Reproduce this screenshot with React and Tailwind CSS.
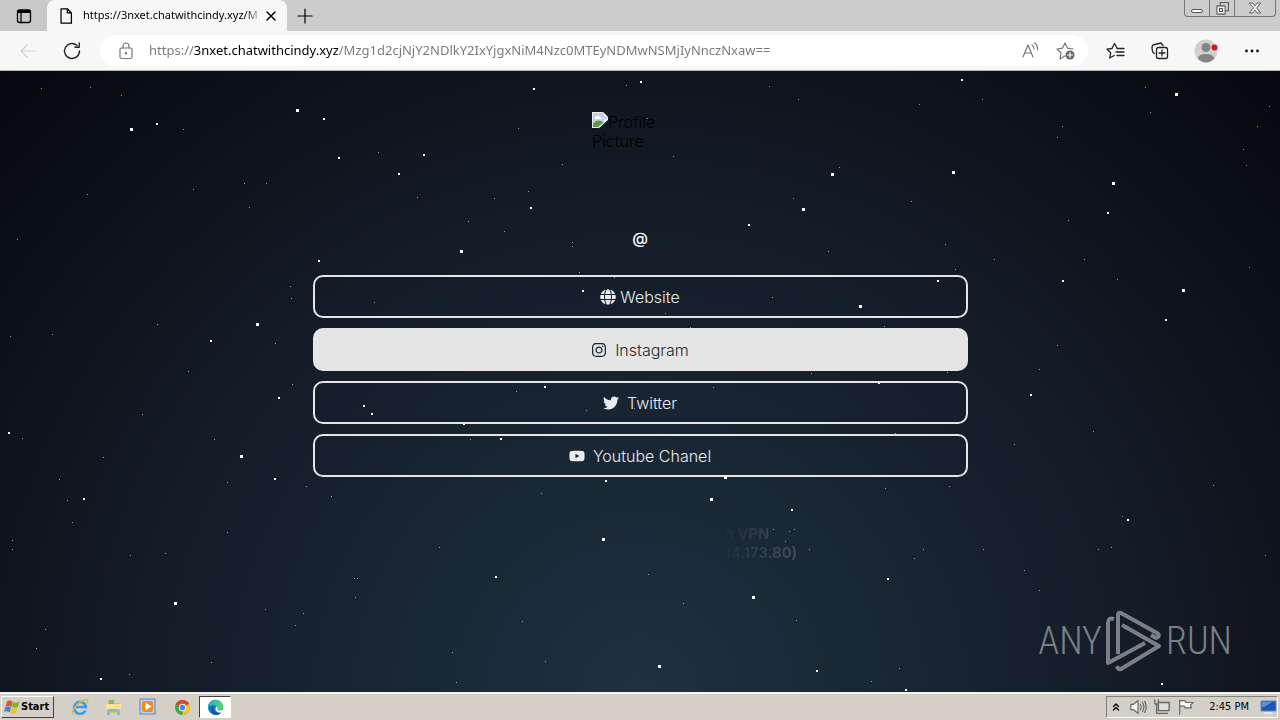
import { useState } from "react";
import { FaGlobe, FaInstagram, FaTwitter, FaYoutube } from "react-icons/fa";

const STARS = {
  1: [
    [41, 88], [90, 87], [121, 95], [183, 129], [626, 85], [518, 128], [378, 152], [562, 164],
    [193, 189], [244, 183], [266, 183], [87, 194], [249, 207], [417, 197], [494, 198], [528, 191],
    [468, 221], [504, 231], [572, 242], [572, 246], [17, 239], [579, 272], [614, 277], [290, 286],
    [291, 298], [374, 302], [157, 324], [10, 336], [52, 334], [275, 343], [188, 371], [292, 384],
    [769, 86], [798, 99], [919, 104], [982, 99], [1145, 87], [1150, 112], [1269, 106], [1257, 126],
    [1062, 126], [1057, 137], [673, 156], [839, 167], [1243, 149], [1246, 165], [793, 198],
    [911, 201], [1068, 220], [945, 244], [828, 251], [994, 259], [1084, 259], [955, 269],
    [1249, 267], [1117, 279], [772, 297], [665, 313], [690, 327], [884, 326], [1057, 345],
    [1039, 369], [811, 373], [947, 372], [713, 387], [647, 118], [142, 414], [214, 439], [22, 438],
    [103, 457], [59, 479], [227, 482], [67, 500], [72, 522], [12, 540], [12, 549], [130, 555],
    [165, 553], [227, 532], [306, 486], [331, 496], [354, 578], [357, 578], [355, 597], [265, 609],
    [303, 613], [295, 625], [45, 629], [36, 648], [211, 662], [129, 674], [439, 547], [541, 493],
    [516, 391], [586, 410], [634, 408], [470, 439], [452, 652], [456, 682], [545, 661], [522, 621],
    [648, 574], [683, 603], [796, 620], [773, 529], [789, 531], [794, 529], [785, 541], [809, 549],
    [895, 433], [885, 488], [949, 486], [1014, 444], [1093, 431], [1122, 516], [983, 549],
    [914, 558], [923, 549], [1024, 570], [1111, 547], [1098, 549], [1213, 485], [1265, 555],
    [1039, 590], [871, 681], [899, 668],
  ],
  2: [
    [534, 89], [157, 124], [324, 119], [339, 158], [424, 155], [399, 174], [531, 208], [319, 261],
    [583, 291], [211, 341], [545, 387], [641, 82], [962, 80], [749, 225], [1108, 213], [938, 281],
    [1063, 281], [1166, 320], [879, 383], [279, 398], [364, 406], [372, 414], [9, 433], [464, 424],
    [501, 439], [1031, 395], [275, 479], [84, 499], [606, 481], [792, 510], [1128, 520],
    [496, 577], [888, 579], [817, 671], [906, 690], [101, 679], [1162, 684],
  ],
  3: [
    [297, 110], [131, 129], [461, 251], [257, 324], [1176, 94], [832, 174], [953, 172],
    [1113, 183], [803, 209], [860, 306], [1183, 290], [241, 456], [711, 499], [603, 539],
    [175, 603], [753, 597], [659, 666], [725, 477],
  ],
};

const LINKS = [
  { label: "Website", icon: FaGlobe, gap: "gap-1" },
  { label: "Instagram", icon: FaInstagram, gap: "gap-2", active: true },
  { label: "Twitter", icon: FaTwitter, gap: "gap-2" },
  { label: "Youtube Chanel", icon: FaYoutube, gap: "gap-2" },
];

function Stars() {
  return (
    <svg className="absolute inset-0 h-full w-full" aria-hidden="true">
      {Object.entries(STARS).map(([size, points]) =>
        points.map(([x, y]) => (
          <rect
            key={`${x}-${y}`}
            x={x - Math.floor(size / 2)}
            y={y - 71 - Math.floor(size / 2)}
            width={size}
            height={size}
            fill="#fff"
            opacity={size === "1" ? 0.55 : 1}
          />
        ))
      )}
    </svg>
  );
}

function Line({ children, className = "h-5 w-5", width = 1.2 }) {
  return (
    <svg
      viewBox="0 0 20 20"
      className={className}
      fill="none"
      stroke="currentColor"
      strokeWidth={width}
      strokeLinecap="round"
      strokeLinejoin="round"
      aria-hidden="true"
    >
      {children}
    </svg>
  );
}

function TabStrip() {
  return (
    <div className="flex h-[31px] items-start bg-[#cccccc]">
      <button aria-label="Tab actions" className="flex h-[31px] w-[47px] items-center justify-center rounded-br-md bg-[#c8c8c8]">
        <Line className="h-5 w-5" width={1.3}>
          <rect x="3.5" y="4" width="13" height="12.500" rx="2" />
          <path d="M4.500 5.500h11" strokeWidth="3" />
          <path d="M7 7v9" />
        </Line>
      </button>
      <div className="flex h-[31px] w-60 items-center rounded-t-lg bg-[#f7f7f7] pr-2 pl-[10px]">
        <Line className="h-[18px] w-[18px] shrink-0" width={1.4}>
          <path d="M4.5 2h7l4.500 4.500V18h-11.500zM11.500 2v4.500H16" />
        </Line>
        <span className="ml-2 flex-1 bg-linear-to-r from-black from-90% to-transparent bg-clip-text text-[11px] whitespace-nowrap text-transparent">
          https://3nxet.chatwithcindy.xyz/M
        </span>
        <button aria-label="Close tab" className="flex h-4 w-4 items-center justify-center">
          <Line className="h-4 w-4" width={1.8}>
            <path d="M5 5l10 10M15 5L5 15" />
          </Line>
        </button>
      </div>
      <button aria-label="New tab" className="flex h-[31px] w-9 items-center justify-center">
        <Line>
          <path d="M10 3v14M3 10h14" />
        </Line>
      </button>
      <div className="mr-1 ml-auto flex h-[17px] rounded-b border border-t-0 border-[#777] text-[#555]">
        <button aria-label="Minimize" className="flex w-[25px] items-end justify-center border-r border-[#777] pb-[3px]">
          <span className="h-1 w-3 rounded-sm border border-current bg-white" />
        </button>
        <button aria-label="Restore" className="flex w-[25px] items-center justify-center border-r border-[#777]">
          <Line className="h-[15px] w-[15px]" width={1.4}>
            <path d="M7 6V2h11v11h-4" />
            <rect x="2.500" y="6.500" width="11" height="11" rx="1" fill="#eee" />
            <rect x="6" y="10" width="4" height="4" />
          </Line>
        </button>
        <button aria-label="Close" className="flex w-10 items-center justify-center">
          <Line className="h-[14px] w-[14px]" width={1.3}>
            <path d="M2 3h5l3 4 3-4h5l-5.500 7 5.500 7h-5l-3-4-3 4H2l5.500-7z" fill="#eee" />
          </Line>
        </button>
      </div>
    </div>
  );
}

function Toolbar() {
  const [url, setUrl] = useState(
    "https://3nxet.chatwithcindy.xyz/Mzg1d2cjNjY2NDlkY2IxYjgxNiM4Nzc0MTEyNDMwNSMjIyNnczNxaw=="
  );

  return (
    <div className="flex h-10 items-center border-b border-[#b5b9bb] bg-[#f7f7f7] px-[18px]">
      <button aria-label="Back" className="text-[#cfcfcf]">
        <Line>
          <path d="M18 10H3M9 4l-6 6 6 6" />
        </Line>
      </button>
      <button aria-label="Refresh" className="ml-6 text-[#222]">
        <Line width={1.4}>
          <path d="M17.500 10a7.500 7.500 0 1 1-2.500-5.600M17.200 2v4.200H13" />
        </Line>
      </button>
      <div className="ml-[18px] flex h-[31px] flex-1 items-center rounded-full bg-white pr-3 pl-4 text-[#777]">
        <Line className="h-5 w-5 shrink-0">
          <rect x="4" y="7" width="12" height="10.500" rx="1.500" />
          <path d="M7 7V5a3 3 0 0 1 6 0v2" />
          <circle cx="10" cy="12.300" r=".6" fill="currentColor" />
        </Line>
        <input
          aria-label="Address"
          value={url}
          onChange={(e) => setUrl(e.target.value)}
          className="ml-[13px] min-w-0 flex-1 bg-[linear-gradient(90deg,#777_45px,#000_45px,#000_189px,#777_189px)] bg-clip-text text-[13px] text-transparent outline-none"
        />
        <button aria-label="Read aloud">
          <Line>
            <path d="M3 16L8 4l5 12M5 12h6M12 4q2 1.500 2 4M14.500 2q3.500 2.500 3 7" />
          </Line>
        </button>
        <button aria-label="Add to favorites" className="ml-4">
          <Line>
            <path d="M9 15l-5 3 1-6-4-4 5.500-.8L9 2l2.500 5.200 5.500.8" />
            <circle cx="14" cy="14" r="4.500" fill="#666" stroke="none" />
            <path d="M14 11.500v5M11.500 14h5" stroke="#fff" />
          </Line>
        </button>
      </div>
      <div className="ml-[18px] flex items-center text-[#222]">
        <button aria-label="Favorites">
          <Line width={1.3}>
            <path d="M11 7L8.500 2.500 6 7.500l-5 .7 3.700 3.600-1 5.200 4.500-2.500M11 7.500h7M10 11h8M11 14.500h7" />
          </Line>
        </button>
        <button aria-label="Collections" className="ml-6">
          <Line width={1.3}>
            <path d="M4.500 12.500L3 11.500Q1 6 3 4l8-2 2 2.500" />
            <rect x="6.500" y="6.500" width="11" height="11" rx="2" />
            <path d="M12 9v6M9 12h6" />
          </Line>
        </button>
        <button aria-label="Profile" className="ml-6 flex h-6 w-6 items-center justify-center">
          <svg viewBox="0 0 24 24" className="h-6 w-6" aria-hidden="true">
            <circle cx="12" cy="12" r="11.500" fill="#d0d0cd" />
            <circle cx="12" cy="8.500" r="4.500" fill="#858585" />
            <path d="M4 20q0-5 8-5t8 5q-8 7-16 0z" fill="#858585" />
            <circle cx="20.500" cy="8.500" r="3" fill="#e0101c" />
          </svg>
        </button>
        <button aria-label="Settings and more" className="ml-6">
          <svg viewBox="0 0 20 20" className="h-5 w-5" fill="#111" aria-hidden="true">
            <circle cx="4.500" cy="10" r="1.400" />
            <circle cx="10" cy="10" r="1.400" />
            <circle cx="15.500" cy="10" r="1.400" />
          </svg>
        </button>
      </div>
    </div>
  );
}

function BrokenImage() {
  return (
    <svg viewBox="0 0 16 16" className="inline h-4 w-4 align-baseline" aria-hidden="true">
      <path d="M0 0h11l5 5v11H0z" fill="#e9edf2" />
      <path d="M1 1h9.500v5H15L2 15H1z" fill="#c0d0ef" />
      <path d="M3 6q0-2 2-2 2-1 3 1 2 0 1 2H3z" fill="#fff" />
      <path d="M1 15v-3q3-5 8-3l3 1-6 5z" fill="#55a045" />
      <path d="M16 8L7 16h9z" fill="#111820" />
      <path d="M11 0v5h5z" fill="#fff" stroke="#8b929b" strokeWidth=".6" />
    </svg>
  );
}

function Watermark() {
  return (
    <div className="absolute right-12 bottom-5 flex items-center gap-1 font-['Roboto_Condensed','Liberation_Sans_Narrow',sans-serif] text-[38px] leading-[62px] text-[#7b8087]">
      <span>ANY</span>
      <svg
        viewBox="0 0 56 62"
        className="h-[62px] w-14"
        fill="none"
        stroke="#7b8087"
        strokeWidth="4"
        strokeLinejoin="round"
        aria-hidden="true"
      >
        <path d="M12 44V5q0-3 3-2l36 20q3 2 1 4l-2 1-5-3" />
        <path d="M8 9Q2 7 2 13v40l37-20" />
        <path d="M16 15l37 21-38 23q-3 1-4-3" />
      </svg>
      <span>RUN</span>
    </div>
  );
}

function LinkPage() {
  return (
    <main className="relative flex flex-1 flex-col items-center overflow-hidden bg-[radial-gradient(ellipse_at_bottom,#1f3040_0%,#131b26_58%,#06080e_100%)] px-6 pt-[41px] font-[Inter,sans-serif] text-base font-light">
      <Stars />
      <div role="img" aria-label="Profile Picture" className="relative h-24 w-24 leading-[19px] text-black">
        <BrokenImage />
        Profile Picture
      </div>
      <h1 className="relative mt-5 text-base leading-5 font-medium text-white">@</h1>
      <nav className="relative mt-[27px] flex w-full max-w-[655px] flex-col gap-[10px]">
        {LINKS.map(({ label, icon: Icon, gap, active }) => (
          <a
            key={label}
            href="#"
            className={`flex h-[43px] items-center justify-center rounded-[10px] border-2 border-[#e5e5e5] ${gap} ${
              active ? "bg-[#e5e5e5] text-[#1b2735]" : "text-[#e8ecf0]"
            }`}
          >
            <Icon className="h-4 w-auto" />
            {label}
          </a>
        ))}
      </nav>
      <div className="relative mt-[47px] flex w-full max-w-[655px] justify-end text-[15px] leading-[19px] font-semibold">
        <p className="w-[243px]">
          <span className="inline-block bg-linear-to-r from-[#1f2c3a] to-[#46525f] bg-clip-text text-transparent">
            n VPN
            <br />
            14.173.80)
          </span>
        </p>
      </div>
      <Watermark />
    </main>
  );
}

function IeIcon() {
  return (
    <svg viewBox="0 0 18 18" className="h-[18px] w-[18px]" fill="none" aria-hidden="true">
      <path d="M14.500 12.500A6 6 0 1 1 15 9H5" stroke="#3a9fdc" strokeWidth="2.600" />
      <path d="M2 16.500Q0 14 4.500 8.500T15 1.500q3 0 1 4" stroke="#e2b43a" strokeWidth="1.300" />
    </svg>
  );
}

function FolderIcon() {
  return (
    <svg viewBox="0 0 18 18" className="h-[18px] w-[18px]" aria-hidden="true">
      <path d="M2 3h5l1 2h7v10H2z" fill="#e5c25c" />
      <path d="M4 2h5v4H4z" fill="#7fb868" />
      <path d="M1 6h15v6H1z" fill="#f6e29a" />
      <path d="M2 17v-4q0-2 2-2h9q2 0 2 2v4h-3v-3H5v3z" fill="#7fbce0" />
    </svg>
  );
}

function MediaIcon() {
  return (
    <svg viewBox="0 0 18 18" className="h-[18px] w-[18px]" aria-hidden="true">
      <rect x="1" y="1" width="15" height="15" fill="#b9d4ef" stroke="#5d86b5" />
      <rect x="3" y="3" width="11" height="11" rx="2" fill="#ef8a1f" />
      <path d="M6.500 4.500l6 4-6 4z" fill="#fff" />
    </svg>
  );
}

function ChromeIcon() {
  return (
    <svg viewBox="0 0 18 18" className="h-[17px] w-[17px]" aria-hidden="true">
      <circle cx="9" cy="9" r="8" fill="#35a853" />
      <path d="M9 9L2.100 5A8 8 0 0 1 15.900 5z" fill="#e04434" />
      <path d="M9 9l6.900-4A8 8 0 0 1 9 17z" fill="#fbc116" />
      <path d="M2.100 5H16l-7 3-3 3z" fill="#e04434" />
      <circle cx="9" cy="9" r="4" fill="#fff" />
      <circle cx="9" cy="9" r="3" fill="#4285f4" />
    </svg>
  );
}

function EdgeIcon() {
  return (
    <svg viewBox="0 0 18 18" className="h-[17px] w-[17px]" aria-hidden="true">
      <defs>
        <linearGradient id="edge-wave" x1="0" y1="0" x2="1" y2=".4">
          <stop offset="0" stopColor="#24a5dd" />
          <stop offset="1" stopColor="#5ed268" />
        </linearGradient>
      </defs>
      <circle cx="9" cy="9" r="8" fill="#1376c8" />
      <path d="M1 9a8 8 0 0 1 16-1q0 4-4.500 4-3 0-1.500-2.500Q10 5.500 5 6.500 2 7 1 9z" fill="url(#edge-wave)" />
      <path d="M7 7.500q-2 5 3 7 3 1 6-1.500Q13 18 8.500 16.800 4 14 5 9.500q.500-2 2-2z" fill="#1650a0" />
      <path d="M9.500 8q2 0 1.500 2.500 0 2 4 1.500l2.500-.500-1 2.500q-5 1.500-7-1.500-1-2 0-4.500z" fill="#fff" />
    </svg>
  );
}

const QUICK_LAUNCH = [
  { label: "Internet Explorer", icon: IeIcon },
  { label: "Explorer", icon: FolderIcon },
  { label: "Media Player", icon: MediaIcon },
  { label: "Chrome", icon: ChromeIcon },
];

function Taskbar() {
  return (
    <footer className="flex h-7 items-center border-t-2 border-[#f4f2ee] bg-[#d4d0c8] pr-[2px] font-['DejaVu_Sans_Condensed','DejaVu_Sans',sans-serif] text-[11px] text-black">
      <button className="ml-[1px] flex h-[22px] w-[53px] items-center gap-[1px] border border-t-white border-r-[#404040] border-b-[#404040] border-l-white pl-[2px] font-bold">
        <svg viewBox="0 0 16 16" className="h-4 w-4 shrink-0" aria-hidden="true">
          <path d="M3 2.500q3-2 5.500 0L7.500 8Q5 6 1.500 7.800z" fill="#e4572b" />
          <path d="M9 3q3 1.500 6.500-.5l-1.500 5.500q-3 1.500-6 0z" fill="#7cb23c" />
          <path d="M1.300 8.300q3-1.500 5.800.2l-1.400 5q-3-2-5.500-.5z" fill="#3f84d6" />
          <path d="M7.700 8.800q3 1.500 6 0L12 14q-3 1.500-5.800 0z" fill="#f3bf2e" />
        </svg>
        Start
      </button>
      <div className="ml-[9px] flex">
        {QUICK_LAUNCH.map(({ label, icon: Icon }) => (
          <button key={label} aria-label={label} className="flex w-[34px] items-center justify-center">
            <Icon />
          </button>
        ))}
        <button aria-label="Edge" className="flex h-[22px] w-8 items-center justify-center border border-t-[#404040] border-r-white border-b-white border-l-[#404040] bg-white">
          <EdgeIcon />
        </button>
      </div>
      <div className="ml-auto flex h-[22px] items-center border border-t-[#808080] border-r-white border-b-white border-l-[#808080] pl-1">
        <button aria-label="Show hidden icons">
          <Line className="h-3 w-[10px]" width={2.5}>
            <path d="M5 9l5-5 5 5M5 16l5-5 5 5" />
          </Line>
        </button>
        <div className="ml-2 flex items-center gap-[6px] text-[#666]">
          <Line className="h-[18px] w-[18px]" width={1.3}>
            <path d="M2 7h3l5-4v14l-5-4H2z" fill="#f5f5f5" />
            <path d="M12.500 7q2 3 0 6M15 5q3 5 0 10M17.500 4q3 6 0 12" />
          </Line>
          <Line className="h-[18px] w-[18px]" width={1.5}>
            <rect x="6" y="5" width="12" height="9" fill="#ddd" />
            <path d="M2 2v4q2 2 4 0V2M4 7v10h5M9 17h7" />
          </Line>
          <Line className="h-[18px] w-[18px]" width={1.3}>
            <path d="M3 2v16M3 3h6l1 2h8l-3 3 1 3H9L8 9H3z" fill="#f5f5f5" />
          </Line>
        </div>
        <time className="ml-[14px]">2:45 PM</time>
        <svg viewBox="0 0 18 16" className="ml-[10px] h-4 w-[18px]" aria-hidden="true">
          <path d="M2 2h15v10H2z" fill="#1d55b4" stroke="#718bb0" />
          <path d="M3 3h10L5 8H3z" fill="#5596df" />
          <path d="M5 13h8v2H5z" fill="#dfe7f0" />
        </svg>
      </div>
    </footer>
  );
}

export default function App() {
  return (
    <div className="flex min-h-screen flex-col font-['Noto_Sans','Open_Sans',sans-serif]">
      <header>
        <TabStrip />
        <Toolbar />
      </header>
      <LinkPage />
      <Taskbar />
    </div>
  );
}
